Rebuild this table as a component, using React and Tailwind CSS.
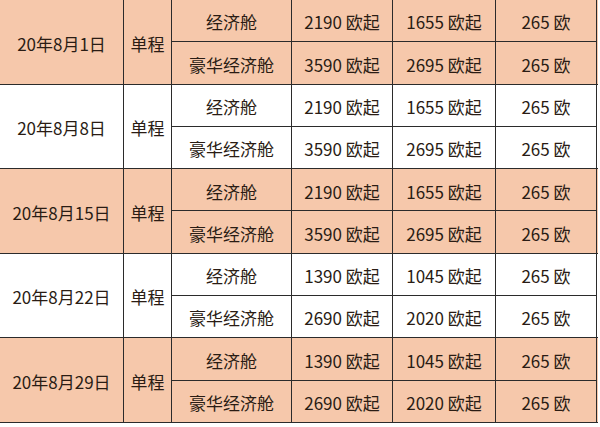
import React from 'react';

const groups = [
    { date: '20年8月1日', peach: true, rows: [['经济舱', '2190 欧起', '1655 欧起', '265 欧'], ['豪华经济舱', '3590 欧起', '2695 欧起', '265 欧']] },
    { date: '20年8月8日', peach: false, rows: [['经济舱', '2190 欧起', '1655 欧起', '265 欧'], ['豪华经济舱', '3590 欧起', '2695 欧起', '265 欧']] },
    { date: '20年8月15日', peach: true, rows: [['经济舱', '2190 欧起', '1655 欧起', '265 欧'], ['豪华经济舱', '3590 欧起', '2695 欧起', '265 欧']] },
    { date: '20年8月22日', peach: false, rows: [['经济舱', '1390 欧起', '1045 欧起', '265 欧'], ['豪华经济舱', '2690 欧起', '2020 欧起', '265 欧']] },
    { date: '20年8月29日', peach: true, rows: [['经济舱', '1390 欧起', '1045 欧起', '265 欧'], ['豪华经济舱', '2690 欧起', '2020 欧起', '265 欧']] },
];

const widths = ['w-[120px]', 'w-[101px]', 'w-[103px]', 'w-[101px]'];

function Group({ group }) {
    return (
        <div className={`flex h-[84.6px] border-b border-[#2b2b2b] ${group.peach ? 'bg-[#f6c8ab]' : 'bg-white'}`}>
            <div className="w-[124px] pt-[3px] flex items-center justify-center border-r border-[#2b2b2b]">{group.date}</div>
            <div className="w-[48px] pt-[3px] flex items-center justify-center border-r border-[#2b2b2b]">单程</div>
            <div className="flex flex-col">
                {group.rows.map((row, i) => (
                    <div key={i} className={`flex flex-1 ${i === 0 ? 'border-b border-[#2b2b2b]' : ''}`}>
                        {row.map((cell, j) => (
                            <div key={j} className={`${widths[j]} pt-[3px] flex items-center justify-center border-r border-[#2b2b2b]`}>{cell}</div>
                        ))}
                    </div>
                ))}
            </div>
        </div>
    );
}

export default function App() {
    return (
        <div className="w-[600px] h-[427px] bg-white overflow-hidden text-[17px] text-[#2a1c14] font-['Noto_Sans_CJK_SC','Noto_Sans',sans-serif]">
            <div className="w-[598px]">
                {groups.map((g, i) => <Group key={i} group={g} />)}
            </div>
        </div>
    );
}
